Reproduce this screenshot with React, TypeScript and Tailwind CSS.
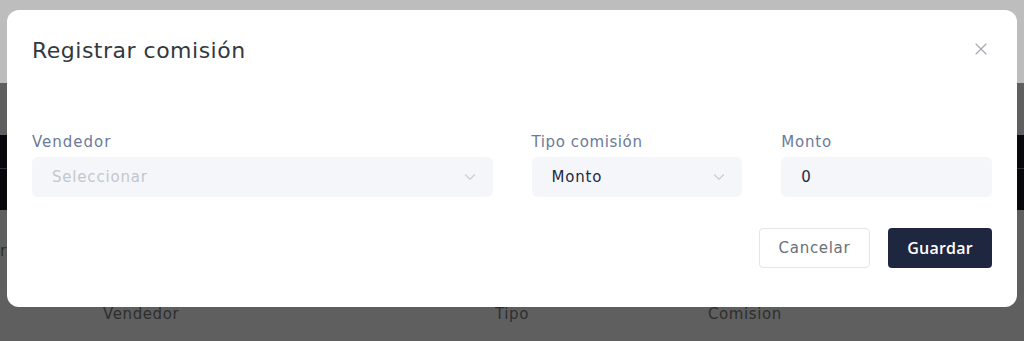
import { ChevronDown, X } from "lucide-react";

const font = { fontFamily: '"DejaVu Sans", "Open Sans", sans-serif' };

function SelectBox({ value, placeholder }: { value?: string; placeholder?: string }) {
  return (
    <div className="flex h-[40px] items-center justify-between rounded-[6px] bg-[#f4f6f9] pl-[20px] pr-[14px]">
      {value ? (
        <span className="text-[15px] tracking-[0.8px] text-[#1f2a44]">{value}</span>
      ) : (
        <span className="text-[15px] tracking-[0.8px] text-[#c3c7cd]">{placeholder}</span>
      )}
      <ChevronDown className="h-[18px] w-[18px] text-[#c9ccd2]" strokeWidth={1.5} />
    </div>
  );
}

export default function App() {
  return (
    <div className="relative h-[341px] w-full overflow-hidden" style={font}>
      {/* page behind the modal */}
      <div className="h-[83px] bg-[#bdbdbd]" />
      <div className="h-[52px] bg-[#5f5f5f]" />
      <div className="flex h-[75px] flex-col bg-[#07070c]">
        <div className="h-[33px]" />
        <div className="h-px bg-[#2a2f3a]" />
      </div>
      <div className="flex h-[131px] flex-col bg-[#5f5f5f]">
        <div className="pt-[30px] text-[15px] text-[#2e2e2e]">r</div>
        <div className="mt-[40px] flex text-[15px] tracking-[0.6px] text-[#2e2e2e]">
          <span className="ml-[103px] w-[392px]">Vendedor</span>
          <span className="w-[213px]">Tipo</span>
          <span>Comision</span>
        </div>
      </div>

      {/* modal */}
      <div className="absolute left-[7px] top-[10px] h-[297px] w-[1010px] rounded-[12px] bg-white px-[25px] pt-[26px]">
        <div className="flex items-center justify-between">
          <h2 className="text-[22px] leading-[30px] tracking-[0.5px] text-[#333840]">Registrar comisión</h2>
          <X className="mr-[1px] mt-[-4px] h-[20px] w-[20px] text-[#a3a7ae]" strokeWidth={1.4} />
        </div>

        <div className="mt-[66px] grid grid-cols-12 gap-x-[39px]">
          <div className="col-span-6">
            <label className="mb-[5px] block text-[15px] leading-[20px] tracking-[1px] text-[#6b7a99]">Vendedor</label>
            <SelectBox placeholder="Seleccionar" />
          </div>
          <div className="col-span-3">
            <label className="mb-[5px] block text-[15px] leading-[20px] tracking-[0.6px] text-[#6b7a99]">Tipo comisión</label>
            <SelectBox value="Monto" />
          </div>
          <div className="col-span-3">
            <label className="mb-[5px] block text-[15px] leading-[20px] tracking-[0.8px] text-[#6b7a99]">Monto</label>
            <div className="flex h-[40px] items-center rounded-[6px] bg-[#f4f6f9] px-[20px] text-[15px] text-[#1f2a44]">
              0
            </div>
          </div>
        </div>

        <div className="mt-[31px] flex justify-end gap-[18px]">
          <button className="h-[40px] w-[111px] rounded-[4px] border border-[#e3e5e8] bg-white text-[15px] tracking-[0.7px] text-[#6b7078]">
            Cancelar
          </button>
          <button
            className="h-[40px] w-[104px] rounded-[4px] bg-[#1f2640] text-[16px] font-semibold tracking-[0.2px] text-white"
            style={{ fontFamily: '"Open Sans", sans-serif' }}
          >
            Guardar
          </button>
        </div>
      </div>
    </div>
  );
}
